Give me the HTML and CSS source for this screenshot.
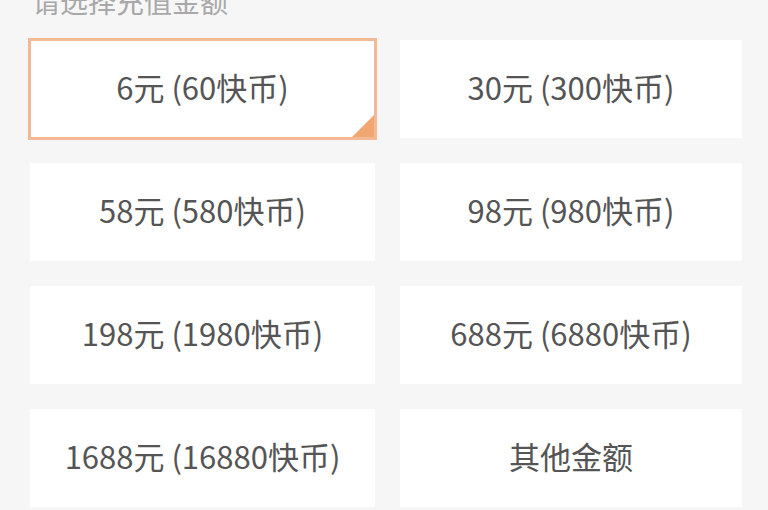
FILE: index.html
```html
<!DOCTYPE html>
<html lang="zh">
<head>
<meta charset="utf-8">
<link rel="stylesheet" href="styles.css">
</head>
<body>
<div class="page">
  <div class="header"><span class="title">请选择充值金额</span></div>
  <div class="grid">
    <div class="card selected">6元 (60快币)<span class="corner"></span></div>
    <div class="card">30元 (300快币)</div>
    <div class="card">58元 (580快币)</div>
    <div class="card">98元 (980快币)</div>
    <div class="card">198元 (1980快币)</div>
    <div class="card">688元 (6880快币)</div>
    <div class="card">1688元 (16880快币)</div>
    <div class="card">其他金额</div>
  </div>
</div>
</body>
</html>
```
FILE: styles.css
```css
html, body {
  margin: 0;
  padding: 0;
  background: #f6f6f6;
  height: 510px;
  overflow: hidden;
}
.page {
  font-family: "Noto Sans CJK SC", "Noto Sans", sans-serif;
  padding-left: 30px;
}
.header {
  height: 40px;
  overflow: hidden;
}
.title {
  display: block;
  font-size: 28px;
  line-height: 28px;
  margin-top: -13px;
  padding-left: 2px;
  color: #a8a8a8;
}
.grid {
  display: grid;
  grid-template-columns: 345px 342px;
  grid-auto-rows: 98px;
  column-gap: 25px;
  row-gap: 25px;
}
.card {
  background: #fff;
  display: flex;
  align-items: center;
  justify-content: center;
  font-size: 31px;
  color: #555;
  position: relative;
  box-sizing: border-box;
  padding-bottom: 5px;
}
.card.selected {
  border: 3px solid #f3b995;
  margin: -2px;
}
.corner {
  position: absolute;
  right: 0;
  bottom: 0;
  width: 0;
  height: 0;
  border-style: solid;
  border-width: 0 0 22px 22px;
  border-color: transparent transparent #f1a772 transparent;
}
```
